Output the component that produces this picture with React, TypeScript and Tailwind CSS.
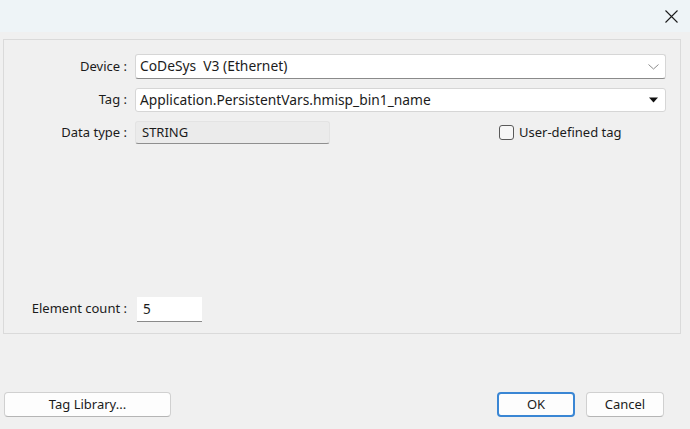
import React from "react";

function Field({ children, className = "" }: { children: React.ReactNode; className?: string }) {
  return (
    <div
      className={`flex items-center bg-white border border-[#d6d6d6] border-b-[#8a8a8a] rounded-[3px] pl-[4px] text-[13.8px] ${className}`}
    >
      {children}
    </div>
  );
}

function Button({ label, primary = false, className = "" }: { label: string; primary?: boolean; className?: string }) {
  return (
    <button
      className={`h-[25px] rounded-[4px] bg-[#fdfdfd] text-[13px] text-[#1b1b1b] ${
        primary ? "border-2 border-[#3a86d4]" : "border border-[#d0d0d0] border-b-[#b5b5b5]"
      } ${className}`}
    >
      {label}
    </button>
  );
}

export default function App() {
  return (
    <div
      className="w-[690px] h-[429px] bg-[#f0f0f0] flex flex-col text-[13px] text-[#1b1b1b]"
      style={{ fontFamily: '"Segoe UI", "Noto Sans", "Open Sans", sans-serif' }}
    >
      {/* title bar */}
      <div className="h-[32px] bg-[#eef4f7] flex items-center justify-end pr-[12px]">
        <svg width="13" height="13" viewBox="0 0 13 13" className="text-[#1b1b1b]">
          <path d="M0.5 0.5 L12.5 12.5 M12.5 0.5 L0.5 12.5" stroke="currentColor" strokeWidth="1.1" />
        </svg>
      </div>

      {/* group box */}
      <div className="mx-[3px] mt-[7px] w-[678px] h-[295px] border border-[#dadada] pt-[14px] flex flex-col">
        <div className="grid grid-cols-[123px_1fr] gap-x-[8px] pr-[14px]">
          <div className="h-[25px] flex items-center justify-end">Device :</div>
          <Field className="h-[25px] justify-between pr-[6px]">
            <span>CoDeSys&nbsp; V3 (Ethernet)</span>
            <svg width="11" height="6" viewBox="0 0 11 6">
              <path d="M0.5 0.5 L5.5 5 L10.5 0.5" fill="none" stroke="#8c8c8c" strokeWidth="1" />
            </svg>
          </Field>

          <div className="h-[24px] mt-[9px] flex items-center justify-end">Tag :</div>
          <Field className="h-[24px] mt-[9px] justify-between pr-[6px] border-b-[#d6d6d6]">
            <span>Application.PersistentVars.hmisp_bin1_name</span>
            <svg width="11" height="6" viewBox="0 0 11 6">
              <path d="M1 0.5 L10 0.5 L5.5 5.5 Z" fill="#111" />
            </svg>
          </Field>

          <div className="h-[23px] mt-[9px] flex items-center justify-end">Data type :</div>
          <div className="mt-[9px] flex items-center">
            <div className="w-[195px] h-[23px] bg-[#ebebeb] border border-[#e3e3e3] border-b-[#8f8f8f] rounded-[3px] flex items-center pl-[6px]">
              STRING
            </div>
            <label className="ml-[169px] flex items-center gap-[5px]">
              <span className="w-[15px] h-[15px] border border-[#5a5a5a] rounded-[3px] bg-[#f7f7f7]" />
              <span>User-defined tag</span>
            </label>
          </div>
        </div>

        <div className="mt-auto mb-[11px] grid grid-cols-[123px_1fr] gap-x-[10px]">
          <div className="h-[25px] flex items-center justify-end pb-[2px]">Element count :</div>
          <div className="w-[65px] h-[25px] bg-white border-b border-[#8a8a8a] flex items-center pl-[6px] text-[13.5px]">5</div>
        </div>
      </div>

      {/* buttons */}
      <div className="mt-auto mb-[12px] flex items-center px-[4px]">
        <Button label="Tag Library..." className="w-[167px]" />
        <Button label="OK" primary className="ml-auto w-[78px]" />
        <Button label="Cancel" className="ml-[11px] mr-[22px] w-[78px]" />
      </div>
    </div>
  );
}
